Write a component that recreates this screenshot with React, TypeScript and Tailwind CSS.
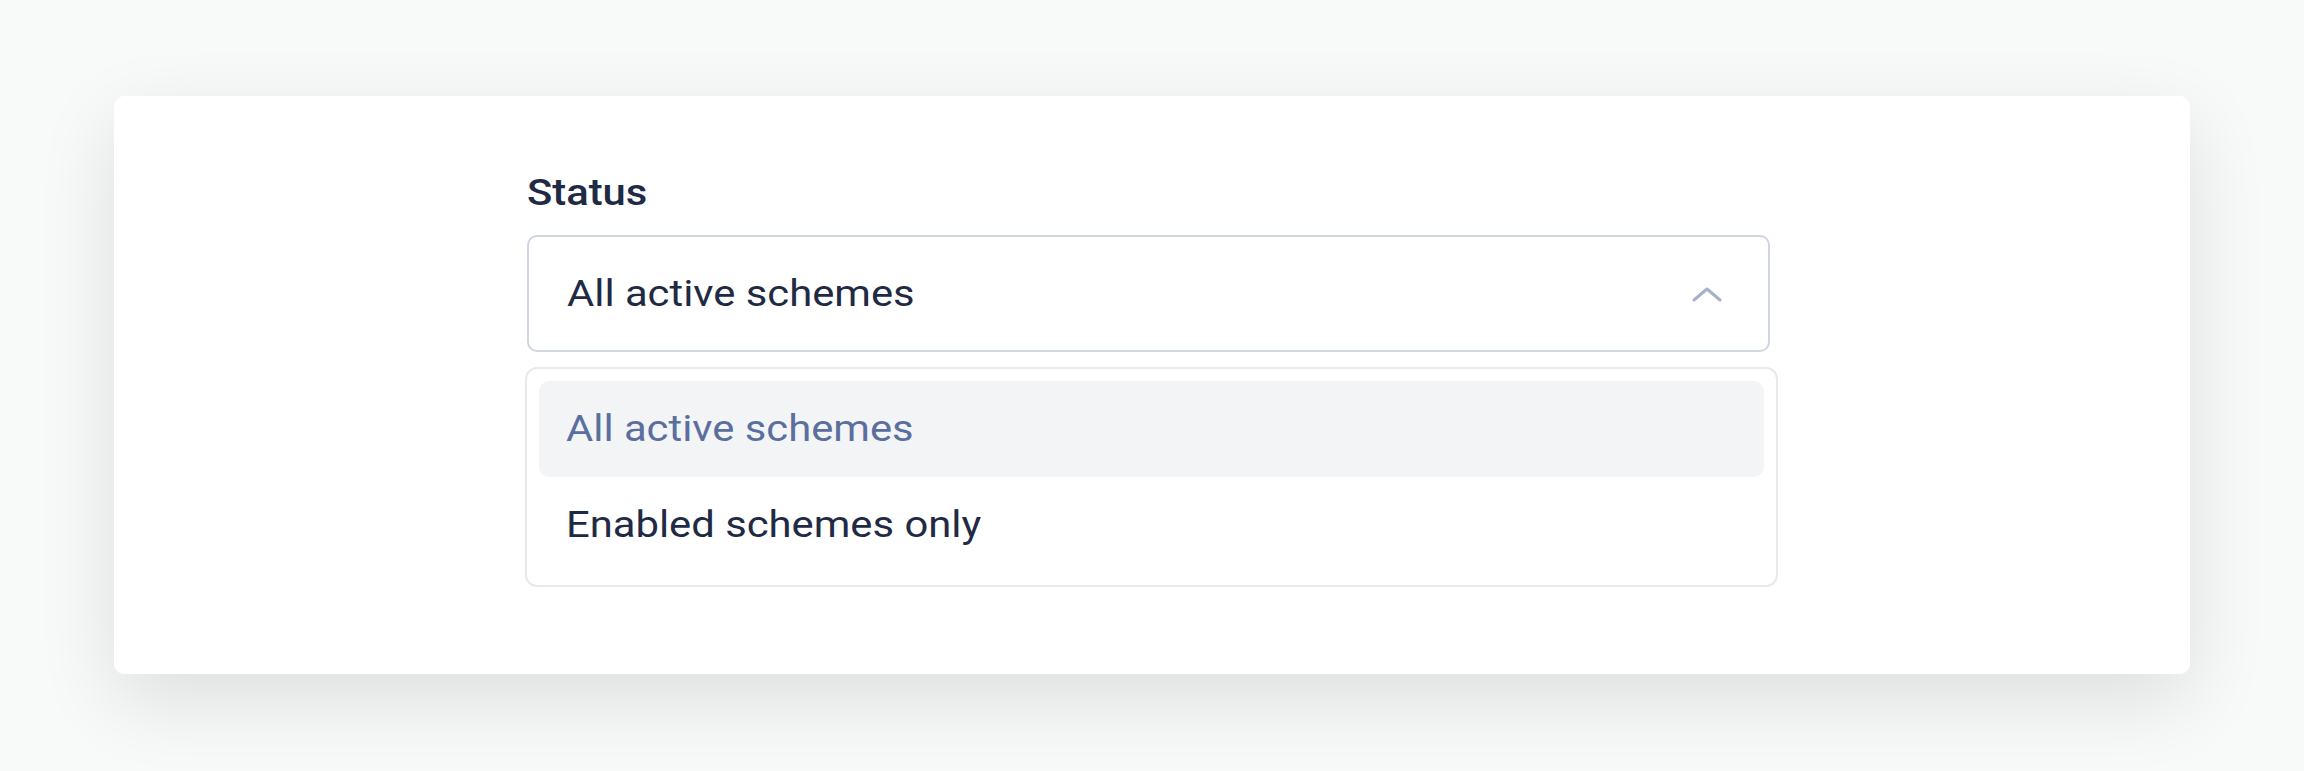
import React from "react";

export default function App() {
  return (
    <div
      className="min-h-[771px] w-[2304px] bg-[#f8f9f9] pt-[96px]"
      style={{ fontFamily: "Roboto, 'Noto Sans', sans-serif" }}
    >
      <div className="mx-[114px] h-[578px] rounded-[10px] bg-white shadow-[0_26px_80px_rgba(0,0,0,0.11)] pl-[413px] pt-[70px]">
        <div className="text-[36px] leading-[54px] font-medium text-[#1f2a44]">
          <span className="inline-block origin-left scale-x-[1.16]">Status</span>
        </div>
        <div className="mt-[15px] flex h-[117px] w-[1243px] items-center justify-between rounded-[10px] border-2 border-[#cfd5e3] pl-[38px] pr-[46px]">
          <span className="inline-block origin-left scale-x-[1.16] text-[36px] text-[#1f2a44]">All active schemes</span>
          <svg width="30" height="16" viewBox="0 0 30 16" fill="none">
            <path d="M2 14 L15 3 L28 14" stroke="#a6b2cb" strokeWidth="3" strokeLinecap="round" strokeLinejoin="round" />
          </svg>
        </div>
        <div className="mt-[15px] -ml-[2px] w-[1253px] rounded-[12px] border-2 border-[#e8e9ec] px-[12px] py-[12px]">
          <div className="flex h-[96px] items-center rounded-[10px] bg-[#f3f4f6] px-[27px] text-[36px] text-[#5a6f9e]">
            <span className="inline-block origin-left scale-x-[1.16]">All active schemes</span>
          </div>
          <div className="flex h-[96px] items-center px-[27px] text-[36px] text-[#1f2a44]">
            <span className="inline-block origin-left scale-x-[1.16]">Enabled schemes only</span>
          </div>
        </div>
      </div>
    </div>
  );
}
